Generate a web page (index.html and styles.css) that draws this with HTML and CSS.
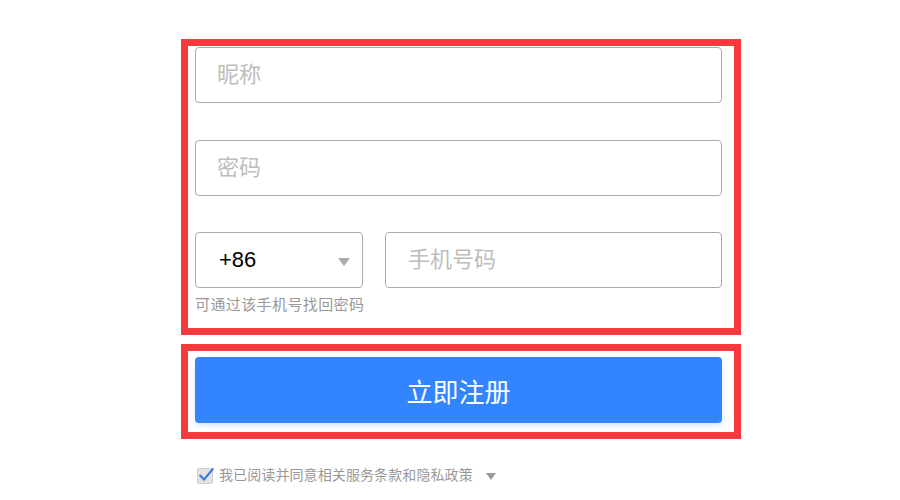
FILE: index.html
```html
<!DOCTYPE html>
<html lang="zh-CN">
<head>
<meta charset="utf-8">
<title>注册</title>
<link rel="stylesheet" href="styles.css">
</head>
<body>
<div class="wrap">
  <div class="box box-form">
    <input class="field" type="text" placeholder="昵称">
    <input class="field field-gap" type="password" placeholder="密码">
    <div class="phone-row">
      <div class="select">
        <span class="code">+86</span>
        <span class="tri"></span>
      </div>
      <input class="field phone" type="text" placeholder="手机号码">
    </div>
    <div class="hint">可通过该手机号找回密码</div>
  </div>
  <div class="box box-btn">
    <button class="submit" type="button">立即注册</button>
  </div>
  <div class="agree">
    <svg class="check" width="17" height="17" viewBox="0 0 17 17">
      <rect x="0.5" y="1.5" width="15" height="15" rx="1.5" fill="#e3e3e3" stroke="#cfcfcf"/>
      <path d="M3.2 8.6 L7 12.6 L15.6 2.2" fill="none" stroke="#3b7de0" stroke-width="2.2" stroke-linecap="round" stroke-linejoin="round"/>
    </svg>
    <span class="agree-text">我已阅读并同意相关服务条款和隐私政策</span>
    <span class="tri tri-small"></span>
  </div>
</div>
</body>
</html>
```
FILE: styles.css
```css
html, body {
  margin: 0;
  padding: 0;
  background: #ffffff;
}

body {
  font-family: "Liberation Sans", "Noto Sans CJK SC", sans-serif;
}

.wrap {
  width: 560px;
  margin-left: 181px;
  padding-top: 39px;
}

.box {
  border: 7px solid #f43a3c;
  box-sizing: border-box;
  padding-left: 7px;
  padding-right: 12px;
}

.box-form {
  padding-top: 1px;
  padding-bottom: 13px;
}

.field {
  display: block;
  box-sizing: border-box;
  width: 100%;
  height: 56px;
  margin: 0;
  border: 1px solid #ababab;
  border-radius: 4px;
  padding: 0 0 0 21px;
  font-family: "Liberation Sans", "Noto Sans CJK SC", sans-serif;
  font-size: 22px;
  color: #333;
  background: #fff;
  outline: none;
}

.field::placeholder {
  color: #bdbdbd;
}

.field-gap {
  margin-top: 37px;
}

.phone-row {
  display: flex;
  gap: 22px;
  margin-top: 36px;
}

.select {
  box-sizing: border-box;
  width: 168px;
  height: 56px;
  border: 1px solid #ababab;
  border-radius: 4px;
  display: flex;
  align-items: center;
  justify-content: space-between;
  padding: 0 12px 0 23px;
}

.code {
  font-size: 22px;
  color: #000;
}

.tri {
  width: 0;
  height: 0;
  border-left: 6px solid transparent;
  border-right: 6px solid transparent;
  border-top: 8px solid #ababab;
  margin-top: 4px;
}

.phone {
  flex: 1;
  width: auto;
  padding-left: 22px;
}

.hint {
  margin-top: 7px;
  font-size: 15px;
  line-height: 20px;
  letter-spacing: 0.4px;
  color: #999;
}

.box-btn {
  margin-top: 9px;
  padding-top: 6px;
  padding-bottom: 9px;
}

.submit {
  display: block;
  width: 100%;
  height: 66px;
  border: none;
  border-radius: 4px;
  background: #3385ff;
  color: #fff;
  font-family: "Liberation Sans", "Noto Sans CJK SC", sans-serif;
  font-size: 26px;
  box-shadow: 0 3px 5px rgba(51, 133, 255, 0.18);
  cursor: pointer;
}

.agree {
  display: flex;
  align-items: center;
  margin-top: 26px;
  padding-left: 16px;
  height: 20px;
}

.check {
  display: block;
  margin-right: 5px;
}

.agree-text {
  font-size: 14px;
  line-height: 20px;
  letter-spacing: 0.1px;
  color: #999;
}

.tri-small {
  border-left-width: 5px;
  border-right-width: 5px;
  border-top: 7px solid #9a9a9a;
  margin-left: 13px;
  margin-top: 2px;
}
```
